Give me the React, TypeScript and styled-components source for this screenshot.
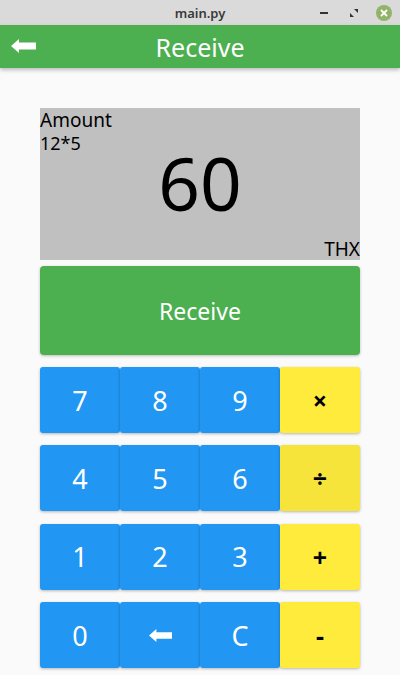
import React from "react";
import styled, { createGlobalStyle } from "styled-components";

const GlobalStyle = createGlobalStyle`
  html, body {
    margin: 0;
    padding: 0;
    background: #fafafa;
    font-family: "Noto Sans", "Open Sans", sans-serif;
  }
`;

const Window = styled.div`
  width: 400px;
  height: 675px;
  display: flex;
  flex-direction: column;
  background: #fafafa;
  overflow: hidden;
`;

const TitleBar = styled.div`
  height: 25px;
  background: #dadada;
  display: flex;
  align-items: center;
  justify-content: center;
  position: relative;
  font-size: 13px;
  font-weight: 600;
  color: #3a3a3a;
`;

const WinControls = styled.div`
  position: absolute;
  right: 8px;
  top: 0;
  height: 25px;
  display: flex;
  align-items: center;
  gap: 14px;
`;

const CtlIcon = styled.span`
  width: 16px;
  height: 16px;
  display: flex;
  align-items: center;
  justify-content: center;
`;

const CloseBtn = styled.span`
  width: 16px;
  height: 16px;
  border-radius: 50%;
  background: #91b46a;
  display: flex;
  align-items: center;
  justify-content: center;
`;

const AppBar = styled.div`
  height: 43px;
  background: #4caf50;
  display: flex;
  align-items: center;
  justify-content: center;
  position: relative;
  color: #fff;
  font-size: 25px;
  box-shadow: 0 2px 4px rgba(0, 0, 0, 0.25);
  z-index: 1;
`;

const BackIcon = styled.span`
  position: absolute;
  left: 11px;
  top: 14px;
  display: flex;
`;

const Content = styled.div`
  padding: 40px 40px 0;
  display: flex;
  flex-direction: column;
`;

const Display = styled.div`
  height: 152px;
  background: #c0c0c0;
  display: flex;
  flex-direction: column;
  color: #000;
`;

const Label = styled.div`
  font-size: 19px;
  line-height: 25px;
`;

const Expr = styled.div`
  font-size: 18px;
  line-height: 20px;
`;

const Result = styled.div`
  flex: 1;
  display: flex;
  align-items: center;
  justify-content: center;
  font-size: 73px;
  line-height: 1;
  margin-top: -16px;
  padding-bottom: 12px;
`;

const Unit = styled.div`
  font-size: 19px;
  line-height: 21px;
  text-align: right;
`;

const ReceiveButton = styled.button`
  margin-top: 6px;
  height: 89px;
  border: none;
  border-radius: 4px;
  background: #4caf50;
  color: #fff;
  font-family: inherit;
  font-size: 23px;
  box-shadow: 0 1px 3px rgba(0, 0, 0, 0.25);
  padding: 0;
`;

const Keypad = styled.div`
  margin-top: 12px;
  display: grid;
  grid-template-columns: repeat(4, 80px);
  grid-auto-rows: 66px;
  row-gap: 12.4px;
`;

const Key = styled.button<{ $op?: boolean; $dim?: boolean }>`
  border: none;
  border-radius: 3px;
  padding: 0;
  font-family: inherit;
  background: ${(p) => (p.$op ? (p.$dim ? "#f7e43a" : "#ffeb3b") : "#2196f3")};
  color: ${(p) => (p.$op ? "#000" : "#fff")};
  font-size: ${(p) => (p.$op ? "25px" : "27px")};
  font-weight: ${(p) => (p.$op ? 700 : 400)};
  box-shadow: 0 1px 3px rgba(0, 0, 0, 0.28);
  display: flex;
  align-items: center;
  justify-content: center;
`;

const Arrow = ({ w, h }: { w: number; h: number }) => (
  <svg width={w} height={h} viewBox="0 0 25 14">
    <path d="M0 7 L8 0 L8 3.5 L25 3.5 L25 10.5 L8 10.5 L8 14 Z" fill="#fff" />
  </svg>
);

const keys: { label: string; op?: boolean; dim?: boolean }[] = [
  { label: "7" },
  { label: "8" },
  { label: "9" },
  { label: "×", op: true },
  { label: "4" },
  { label: "5" },
  { label: "6" },
  { label: "÷", op: true, dim: true },
  { label: "1" },
  { label: "2" },
  { label: "3" },
  { label: "+", op: true },
  { label: "0" },
  { label: "back" },
  { label: "C" },
  { label: "-", op: true },
];

export default function App() {
  return (
    <Window>
      <GlobalStyle />
      <TitleBar>
        main.py
        <WinControls>
          <CtlIcon>
            <svg width="10" height="10" viewBox="0 0 10 10">
              <rect x="1" y="4" width="8" height="2" fill="#333" />
            </svg>
          </CtlIcon>
          <CtlIcon>
            <svg width="10" height="10" viewBox="0 0 10 10">
              <path d="M1 9 L1 5 L5 9 Z M9 1 L9 5 L5 1 Z" fill="#333" />
            </svg>
          </CtlIcon>
          <CloseBtn>
            <svg width="8" height="8" viewBox="0 0 8 8">
              <path d="M1 1 L7 7 M7 1 L1 7" stroke="#fff" strokeWidth="1.8" />
            </svg>
          </CloseBtn>
        </WinControls>
      </TitleBar>
      <AppBar>
        <BackIcon>
          <Arrow w={25} h={14} />
        </BackIcon>
        Receive
      </AppBar>
      <Content>
        <Display>
          <Label>Amount</Label>
          <Expr>12*5</Expr>
          <Result>60</Result>
          <Unit>THX</Unit>
        </Display>
        <ReceiveButton>Receive</ReceiveButton>
        <Keypad>
          {keys.map((k) => (
            <Key key={k.label} $op={k.op} $dim={k.dim}>
              {k.label === "back" ? <Arrow w={23} h={13} /> : k.label}
            </Key>
          ))}
        </Keypad>
      </Content>
    </Window>
  );
}
